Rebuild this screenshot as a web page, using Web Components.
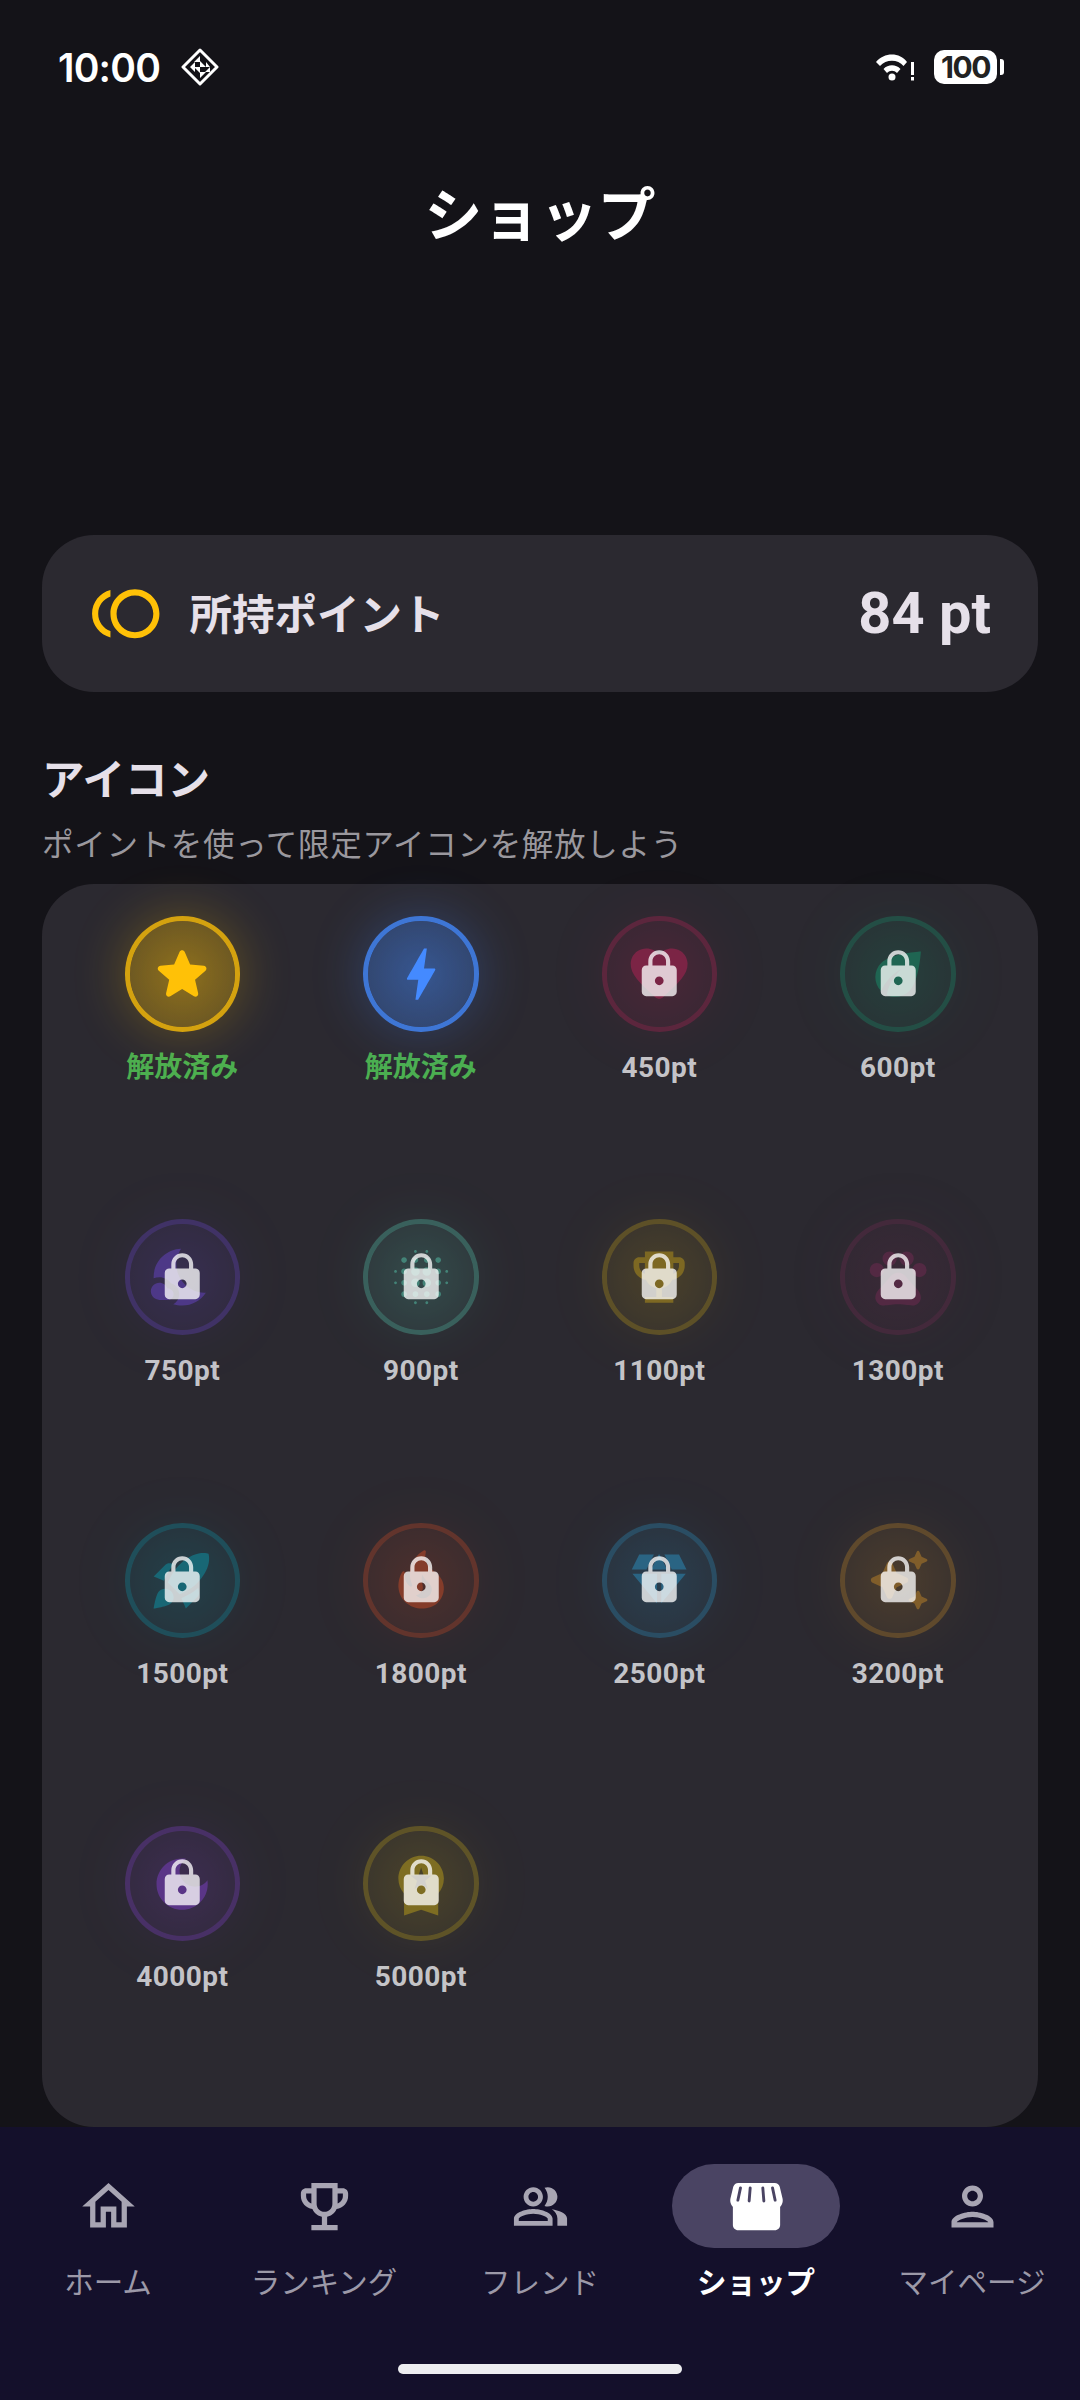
<!DOCTYPE html>
<html lang="ja">
<head>
<meta charset="utf-8">
<title>ショップ</title>
<style>
  html, body { margin: 0; padding: 0; background: #141318; }
  body { width: 1080px; height: 2400px; overflow: hidden; font-family: Roboto, "Noto Sans CJK JP", sans-serif; }
</style>
</head>
<body>
<shop-page>
  <status-bar slot="status"></status-bar>
  <app-title slot="title">ショップ</app-title>
  <point-card slot="points" value="84 pt">所持ポイント</point-card>
  <section-head slot="head" sub="ポイントを使って限定アイコンを解放しよう">アイコン</section-head>
  <icon-grid slot="grid">
    <shop-icon icon="star" color="#FFC107" unlocked>解放済み</shop-icon>
    <shop-icon icon="bolt" color="#448AFF" unlocked>解放済み</shop-icon>
    <shop-icon icon="heart" color="#E91E63">450pt</shop-icon>
    <shop-icon icon="eco" color="#10B981">600pt</shop-icon>
    <shop-icon icon="night" color="#7C4DFF">750pt</shop-icon>
    <shop-icon icon="blur" color="#64FFDA">900pt</shop-icon>
    <shop-icon icon="trophy" color="#EEC010">1100pt</shop-icon>
    <shop-icon icon="pets" color="#8A2A5E">1300pt</shop-icon>
    <shop-icon icon="rocket" color="#00BCD4">1500pt</shop-icon>
    <shop-icon icon="fire" color="#FF5722">1800pt</shop-icon>
    <shop-icon icon="diamond" color="#29B6F6">2500pt</shop-icon>
    <shop-icon icon="sparkle" color="#F5A623">3200pt</shop-icon>
    <shop-icon icon="dark" color="#9C47FF">4000pt</shop-icon>
    <shop-icon icon="medal" color="#F0CC10">5000pt</shop-icon>
  </icon-grid>
  <nav-bar slot="nav">
    <nav-item icon="home">ホーム</nav-item>
    <nav-item icon="trophy">ランキング</nav-item>
    <nav-item icon="people">フレンド</nav-item>
    <nav-item icon="store" selected>ショップ</nav-item>
    <nav-item icon="person">マイページ</nav-item>
  </nav-bar>
</shop-page>

<script>
const JP = 'Roboto, "Noto Sans CJK JP", sans-serif';

const SHOP_ICONS = {
  star: 'M12 17.27l4.15 2.51c.76.46 1.69-.22 1.49-1.08l-1.1-4.72 3.67-3.18c.67-.58.31-1.68-.57-1.75l-4.83-.41-1.89-4.46c-.34-.81-1.5-.81-1.84 0L9.19 8.63l-4.83.41c-.88.07-1.24 1.17-.57 1.75l3.67 3.18-1.1 4.72c-.2.86.73 1.54 1.49 1.08l4.15-2.5z',
  bolt: 'M11 21h-1l1-7H7.5c-.88 0-.33-.75-.31-.78C8.48 10.94 10.42 7.54 13.01 3h1l-1 7h3.51c.4 0 .62.19.4.66C12.97 17.55 11 21 11 21z',
  heart: 'M13.35 20.13c-.76.69-1.93.69-2.69-.01l-.11-.1C5.3 15.27 1.87 12.16 2 8.28c.06-1.7.93-3.33 2.34-4.29 2.64-1.8 5.9-.96 7.66 1.1 1.76-2.06 5.02-2.91 7.66-1.1 1.41.96 2.28 2.59 2.34 4.29.14 3.88-3.3 6.99-8.55 11.76l-.1.09z',
  eco: 'M6.05 8.05c-2.73 2.73-2.73 7.15-.02 9.88 1.47-3.4 4.09-6.24 7.36-7.93-2.77 2.34-4.71 5.61-5.39 9.32 2.6 1.23 5.8.78 7.95-1.37C19.43 14.47 20 4 20 4S9.53 4.57 6.05 8.05z',
  night: 'M11.1 12.08c-2.33-4.51-.5-8.48.53-10.07C6.27 2.2 1.98 6.59 1.98 12c0 .14.02.28.02.42.62-.27 1.29-.42 2-.42 1.66 0 3.18.83 4.1 2.15C9.77 14.63 11 16.17 11 18c0 1.52-.87 2.83-2.12 3.51.98.32 2.03.5 3.11.5 3.5 0 6.58-1.8 8.37-4.52-2.36.23-6.98-.97-9.26-5.41zM7 16h-.18C6.4 14.84 5.3 14 4 14c-1.66 0-3 1.34-3 3s1.34 3 3 3h3c1.1 0 2-.9 2-2s-.9-2-2-2z',
  blur: 'M6 13c-.55 0-1 .45-1 1s.45 1 1 1 1-.45 1-1-.45-1-1-1zm0 4c-.55 0-1 .45-1 1s.45 1 1 1 1-.45 1-1-.45-1-1-1zm0-8c-.55 0-1 .45-1 1s.45 1 1 1 1-.45 1-1-.45-1-1-1zm-3 .5c-.28 0-.5.22-.5.5s.22.5.5.5.5-.22.5-.5-.22-.5-.5-.5zM6 5c-.55 0-1 .45-1 1s.45 1 1 1 1-.45 1-1-.45-1-1-1zm15 5.5c.28 0 .5-.22.5-.5s-.22-.5-.5-.5-.5.22-.5.5.22.5.5.5zM14 7c.55 0 1-.45 1-1s-.45-1-1-1-1 .45-1 1 .45 1 1 1zm0-3.5c.28 0 .5-.22.5-.5s-.22-.5-.5-.5-.5.22-.5.5.22.5.5.5zm-11 10c-.28 0-.5.22-.5.5s.22.5.5.5.5-.22.5-.5-.22-.5-.5-.5zm7 7c-.28 0-.5.22-.5.5s.22.5.5.5.5-.22.5-.5-.22-.5-.5-.5zM10 3.5c.28 0 .5-.22.5-.5s-.22-.5-.5-.5-.5.22-.5.5.22.5.5.5zM10 7c.55 0 1-.45 1-1s-.45-1-1-1-1 .45-1 1 .45 1 1 1zm0 5.5c-.83 0-1.5.67-1.5 1.5s.67 1.5 1.5 1.5 1.5-.67 1.5-1.5-.67-1.5-1.5-1.5zm8 .5c-.55 0-1 .45-1 1s.45 1 1 1 1-.45 1-1-.45-1-1-1zm0 4c-.55 0-1 .45-1 1s.45 1 1 1 1-.45 1-1-.45-1-1-1zm0-8c-.55 0-1 .45-1 1s.45 1 1 1 1-.45 1-1-.45-1-1-1zm0-4c-.55 0-1 .45-1 1s.45 1 1 1 1-.45 1-1-.45-1-1-1zm3 8.5c-.28 0-.5.22-.5.5s.22.5.5.5.5-.22.5-.5-.22-.5-.5-.5zM14 17c-.55 0-1 .45-1 1s.45 1 1 1 1-.45 1-1-.45-1-1-1zm0 3.5c-.28 0-.5.22-.5.5s.22.5.5.5.5-.22.5-.5-.22-.5-.5-.5zm-4-12c-.83 0-1.5.67-1.5 1.5s.67 1.5 1.5 1.5 1.5-.67 1.5-1.5-.67-1.5-1.5-1.5zm0 8.5c-.55 0-1 .45-1 1s.45 1 1 1 1-.45 1-1-.45-1-1-1zm4-4.5c-.83 0-1.5.67-1.5 1.5s.67 1.5 1.5 1.5 1.5-.67 1.5-1.5-.67-1.5-1.5-1.5zm0-4c-.83 0-1.5.67-1.5 1.5s.67 1.5 1.5 1.5 1.5-.67 1.5-1.5-.67-1.5-1.5-1.5z',
  trophy: 'M19 5h-2V3H7v2H5c-1.1 0-2 .9-2 2v1c0 2.55 1.92 4.63 4.39 4.94.63 1.5 1.98 2.63 3.61 2.96V19H7v2h10v-2h-4v-3.1c1.63-.33 2.98-1.46 3.61-2.96C19.08 12.63 21 10.55 21 8V7c0-1.1-.9-2-2-2zM5 8V7h2v3.82C5.84 10.4 5 9.3 5 8zm14 0c0 1.3-.84 2.4-2 2.82V7h2v1z',
  pets: 'M4.5 7a2.5 2.5 0 1 1 0 5 2.5 2.5 0 0 1 0-5zM9 3a2.5 2.5 0 1 1 0 5 2.5 2.5 0 0 1 0-5zM15 3a2.5 2.5 0 1 1 0 5 2.5 2.5 0 0 1 0-5zM19.5 7a2.5 2.5 0 1 1 0 5 2.5 2.5 0 0 1 0-5zM17.34 14.86c-.87-1.02-1.6-1.89-2.48-2.91-.46-.54-1.05-1.08-1.75-1.32-.11-.04-.22-.07-.33-.09-.25-.04-.52-.04-.78-.04s-.53 0-.79.05c-.11.02-.22.05-.33.09-.7.24-1.28.78-1.75 1.32-.87 1.02-1.6 1.89-2.48 2.91-1.31 1.31-2.92 2.76-2.62 4.79.29 1.02 1.02 2.03 2.33 2.32.73.15 3.06-.44 5.54-.44h.18c2.48 0 4.81.58 5.54.44 1.31-.29 2.04-1.31 2.33-2.32.31-2.04-1.3-3.49-2.61-4.8z',
  rocket: 'M9.19 6.35c-2.04 2.29-3.44 5.58-3.57 5.89L2 10.69l4.05-4.05c.47-.47 1.15-.68 1.81-.55l1.33.26zM11.17 17s3.74-1.55 5.89-3.7c5.4-5.4 4.5-9.62 4.21-10.57-.95-.3-5.17-1.19-10.57 4.21C8.55 9.09 7 12.83 7 12.83L11.17 17zm6.48-2.19c-2.29 2.04-5.58 3.44-5.89 3.57L13.31 22l4.05-4.05c.47-.47.68-1.15.55-1.81l-.26-1.33zM9 18c0 .83-.34 1.58-.88 2.12C6.94 21.3 2 22 2 22s.7-4.94 1.88-6.12C4.42 15.34 5.17 15 6 15c1.66 0 3 1.34 3 3z',
  fire: 'M19.48 12.35c-1.57-4.08-7.16-4.3-5.81-10.23.1-.44-.37-.78-.75-.55C9.29 3.71 6.68 8 8.87 13.62c.18.46-.36.89-.75.59-1.81-1.37-2-3.34-1.84-4.75.06-.52-.62-.77-.91-.34C4.69 10.16 4 11.84 4 14.37c.38 5.6 5.11 7.32 6.81 7.54 2.43.31 5.06-.14 6.95-1.87 2.08-1.93 2.84-5.01 1.72-7.69zm-9.28 5.03c1.44-.35 2.18-1.39 2.38-2.31.33-1.43-.96-2.83-.09-5.09.33 1.87 3.27 3.04 3.27 5.08.08 2.53-2.66 4.7-5.56 2.32z',
  diamond: 'M12.16 3h-.32L9.21 8.25h5.58L12.16 3zM16.46 8.25h5.16L19 3h-5.16l2.62 5.25zM21.38 9.75H12.75V20.1l8.63-10.35zM11.25 20.1V9.75H2.62l8.63 10.35zM7.54 8.25L10.16 3H5L2.38 8.25h5.16z',
  sparkle: 'M19.46 8l.79-1.75L22 5.46c.39-.18.39-.73 0-.91l-1.75-.79L19.46 2c-.18-.39-.73-.39-.91 0l-.79 1.75-1.76.79c-.39.18-.39.73 0 .91l1.75.79.79 1.76c.18.39.74.39.92 0zM11.5 9.5L9.91 6c-.35-.78-1.47-.78-1.82 0L6.5 9.5 3 11.09c-.78.36-.78 1.47 0 1.82l3.5 1.59L8.09 18c.36.78 1.47.78 1.82 0l1.59-3.5 3.5-1.59c.78-.36.78-1.47 0-1.82L11.5 9.5zm7.04 6.5l-.79 1.75-1.75.79c-.39.18-.39.73 0 .91l1.75.79.79 1.76c.18.39.73.39.91 0l.79-1.75 1.76-.79c.39-.18.39-.73 0-.91l-1.75-.79-.79-1.76c-.18-.39-.74-.39-.92 0z',
  dark: 'M12 3c-4.97 0-9 4.03-9 9s4.03 9 9 9 9-4.03 9-9c0-.46-.04-.92-.1-1.36-.98 1.37-2.58 2.26-4.4 2.26-2.98 0-5.4-2.42-5.4-5.4 0-1.81.89-3.42 2.26-4.4C12.92 3.04 12.46 3 12 3z',
  medal: 'M9.68 13.69L12 11.93l2.31 1.76-.88-2.85L15.75 9h-2.84L12 6.19 11.09 9H8.25l2.31 1.84-.88 2.85zM20 10c0-4.42-3.58-8-8-8s-8 3.58-8 8c0 2.03.76 3.87 2 5.28V23l6-2 6 2v-7.72c1.24-1.41 2-3.25 2-5.28z'
};
const LOCK = 'M18 8h-1V6c0-2.76-2.24-5-5-5S7 3.24 7 6v2H6c-1.1 0-2 .9-2 2v10c0 1.1.9 2 2 2h12c1.1 0 2-.9 2-2V10c0-1.1-.9-2-2-2zm-6 9c-1.1 0-2-.9-2-2s.9-2 2-2 2 .9 2 2-.9 2-2 2zm3.1-9H8.9V6c0-1.71 1.39-3.1 3.1-3.1 1.71 0 3.1 1.39 3.1 3.1v2z';
const NAV_ICONS = {
  home: '<path d="M12 5.69l5 4.5V18h-2v-6H9v6H7v-7.81l5-4.5M12 3L2 12h3v8h6v-6h2v6h6v-8h3L12 3z"/>',
  trophy: '<path d="M19 5h-2V3H7v2H5c-1.1 0-2 .9-2 2v1c0 2.55 1.92 4.63 4.39 4.94.63 1.5 1.98 2.63 3.61 2.96V19H7v2h10v-2h-4v-3.1c1.63-.33 2.98-1.46 3.61-2.96C19.08 12.63 21 10.55 21 8V7c0-1.1-.9-2-2-2zM5 8V7h2v3.82C5.84 10.4 5 9.3 5 8zm7 6c-1.65 0-3-1.35-3-3V5h6v6c0 1.65-1.35 3-3 3zm7-6c0 1.3-.84 2.4-2 2.82V7h2v1z"/>',
  people: '<g transform="translate(12 12) scale(.92) translate(-12 -12)"><path d="M16.67 13.13C18.04 14.06 19 15.32 19 17v3h4v-3c0-2.18-3.57-3.47-6.33-3.87zM15 12c2.21 0 4-1.79 4-4s-1.79-4-4-4c-.47 0-.91.1-1.33.24C14.5 5.27 15 6.58 15 8s-.5 2.73-1.33 3.76c.42.14.86.24 1.33.24zM9 12c2.21 0 4-1.79 4-4s-1.79-4-4-4-4 1.79-4 4 1.79 4 4 4zm0-6c1.1 0 2 .9 2 2s-.9 2-2 2-2-.9-2-2 .9-2 2-2zM9 13c-2.67 0-8 1.34-8 4v3h16v-3c0-2.66-5.33-4-8-4zm6 5H3v-.99C3.2 16.29 6.3 15 9 15s5.8 1.29 6 2v1z"/></g>',
  store: '<path d="M21.9 8.89l-1.05-4.37c-.22-.9-1-1.52-1.91-1.52H5.05c-.9 0-1.69.63-1.9 1.52L2.1 8.89c-.24 1.02-.02 2.06.62 2.88.08.11.19.19.28.29V19c0 1.1.9 2 2 2h14c1.1 0 2-.9 2-2v-6.94c.09-.09.2-.18.28-.28.64-.82.87-1.87.62-2.89z"/><g fill="none" stroke="#4A4463" stroke-width="1.1" stroke-linecap="round"><path d="M5.9 4.9L4.9 9.6"/><path d="M9.6 4.9L9.2 9.9"/><path d="M14.4 4.9L14.8 9.9"/><path d="M18.1 4.9L19.1 9.6"/></g>',
  person: '<path d="M12 6c1.1 0 2 .9 2 2s-.9 2-2 2-2-.9-2-2 .9-2 2-2m0 10c2.7 0 5.8 1.29 6 2H6c.23-.72 3.31-2 6-2m0-12C9.79 4 8 5.79 8 8s1.79 4 4 4 4-1.79 4-4-1.79-4-4-4zm0 10c-2.67 0-8 1.34-8 4v2h16v-2c0-2.66-5.33-4-8-4z"/>'
};

function define(name, html, init) {
  customElements.define(name, class extends HTMLElement {
    constructor() {
      super();
      this.attachShadow({ mode: 'open' }).innerHTML = html;
    }
    connectedCallback() { if (init) init(this, this.shadowRoot); }
  });
}

define('shop-page', `
  <style>
    :host { display: flex; flex-direction: column; width: 1080px; height: 2400px; background: #141318; font-family: ${JP}; }
    .body { flex: 1; min-height: 0; display: flex; flex-direction: column; padding: 0 42px; }
  </style>
  <slot name="status"></slot>
  <slot name="title"></slot>
  <div class="body">
    <slot name="points"></slot>
    <slot name="head"></slot>
    <slot name="grid"></slot>
  </div>
  <slot name="nav"></slot>`);

define('status-bar', `
  <style>
    :host { display: flex; align-items: center; height: 88px; padding: 50px 76px 4px 58px; box-sizing: border-box; color: #fff; flex: none; }
    .time { font: 600 39px/1 Inter, Roboto, sans-serif; letter-spacing: -0.8px; }
    .diamond { margin-left: 21px; display: block; }
    .sp { flex: 1; }
    .wifi { display: block; margin-right: 18px; }
    .bat { width: 63px; height: 34px; border-radius: 10px; background: #fff; color: #222; font: 700 30px/34px Inter, Roboto, sans-serif; letter-spacing: -1.5px; text-align: center; }
    .nub { width: 4px; height: 16px; background: #fff; border-radius: 0 3px 3px 0; margin-left: 3px; }
  </style>
  <span class="time">10:00</span>
  <svg class="diamond" width="38" height="38" viewBox="0 0 38 38">
    <path d="M19 2L36 19 19 36 2 19z" fill="none" stroke="#fff" stroke-width="3" stroke-linejoin="round"/>
    <path d="M19 8L13 14h6zM9 19l5-5v5zM19 19h6l-6-6zM29 19l-4-5v5zM19 19h-6l6 6zM19 30l6-6h-6zM9 19l5 5v-5zM29 19l-5 5h5z" fill="#fff"/>
  </svg>
  <span class="sp"></span>
  <svg class="wifi" width="40" height="30" viewBox="0 0 40 30">
    <path d="M0 10C8 0 24 0 31 10l-3.5 4C22 7 10 7 4 14z" fill="#fff"/>
    <path d="M7.500 17C12 12 20 12 24.500 17L21 21C18 18 14 18 11 21z" fill="#fff"/>
    <circle cx="16" cy="25" r="3.500" fill="#fff"/>
    <rect x="35" y="10" width="3" height="13" fill="#fff"/><rect x="35" y="25" width="3" height="3.500" fill="#fff"/>
  </svg>
  <span class="bat">100</span><span class="nub"></span>`);

define('app-title', `
  <style>
    :host { display: block; flex: none; height: 447px; padding-top: 94px; box-sizing: border-box; text-align: center; color: #fff; font: 700 57.750px/68px ${JP}; }
  </style>
  <slot></slot>`);

define('point-card', `
  <style>
    :host { display: flex; flex: none; align-items: center; height: 157px; padding: 0 47px; box-sizing: border-box; border-radius: 52px; background: #2B2930; color: #E6E0E9; }
    svg { display: block; width: 73.500px; height: 73.500px; fill: #FFC107; flex: none; }
    .label { margin-left: 27px; padding-top: 6px; font: 700 42.500px/1 ${JP}; flex: 1; }
    .val { font: 700 57.750px/1 Roboto, sans-serif; }
  </style>
  <svg viewBox="0 0 24 24"><path d="M15 4c-4.420 0-8 3.580-8 8s3.580 8 8 8 8-3.580 8-8-3.580-8-8-8zm0 14c-3.310 0-6-2.690-6-6s2.690-6 6-6 6 2.690 6 6-2.690 6-6 6zM3 12c0-2.610 1.670-4.830 4-5.650V4.260C3.550 5.150 1 8.270 1 12s2.550 6.850 6 7.740v-2.090c-2.330-.82-4-3.040-4-5.650z"/></svg>
  <span class="label"><slot></slot></span>
  <span class="val"></span>`, (el, root) => { root.querySelector('.val').textContent = el.getAttribute('value'); });

define('section-head', `
  <style>
    :host { display: block; flex: none; height: 192px; padding-top: 63px; box-sizing: border-box; }
    .t { color: #E6E0E9; font: 700 42.500px/52px ${JP}; }
    .s { color: #9A989E; font: 400 31.500px/44px ${JP}; letter-spacing: .7px; margin-top: 17px; }
  </style>
  <div class="t"><slot></slot></div>
  <div class="s"></div>`, (el, root) => { root.querySelector('.s').textContent = el.getAttribute('sub'); });

define('icon-grid', `
  <style>
    :host { display: grid; flex: 1; min-height: 0; grid-template-columns: repeat(4, 1fr); grid-auto-rows: 303.330px; align-content: start; padding: 32px 21px 0; box-sizing: border-box; background: #2B2930; border-radius: 52px; }
  </style>
  <slot></slot>`);

define('shop-icon', `
  <style>
    :host { display: flex; flex-direction: column; align-items: center; font-family: ${JP}; --ring: 80%; --mid: 47%; --edge: 26%; --halo: 28%; }
    :host(:not([unlocked])) { --ring: 62%; --mid: 38%; --edge: 15%; --halo: 18%; }
    .badge { position: relative; width: 115.500px; height: 115.500px; flex: none; }
    .disc { width: 100%; height: 100%; box-sizing: border-box; border-radius: 50%; border: 5.250px solid color-mix(in srgb, var(--c) var(--ring), transparent);
      background: radial-gradient(circle, color-mix(in srgb, var(--c) var(--mid), transparent) 0%, color-mix(in srgb, var(--c) var(--edge), transparent) 100%);
      background-clip: padding-box;
      box-shadow: 0 0 52px color-mix(in srgb, var(--c) var(--halo), transparent);
      display: flex; align-items: center; justify-content: center; }
    :host(:not([unlocked])) .disc { opacity: .42; }
    .glyph { display: block; width: 68.250px; height: 68.250px; flex: none; fill: var(--c); fill-rule: evenodd; }
    .lock { position: absolute; left: 50%; top: 50%; width: 52.500px; height: 52.500px; margin: -26.250px 0 0 -26.250px; fill: rgba(255,255,255,.76); }
    :host([unlocked]) .lock { display: none; }
    .label { margin-top: 18px; font-size: 28px; line-height: 36px; font-weight: 700; letter-spacing: .45px; color: #C4C4C8; }
    :host([unlocked]) .label { color: #4CAF50; letter-spacing: 0; }
  </style>
  <div class="badge">
    <div class="disc"><svg class="glyph" viewBox="0 0 24 24"><path/></svg></div>
    <svg class="lock" viewBox="0 0 24 24"><path d="${LOCK}"/></svg>
  </div>
  <div class="label"><slot></slot></div>`, (el, root) => {
    el.style.setProperty('--c', el.getAttribute('color'));
    root.querySelector('.glyph path').setAttribute('d', SHOP_ICONS[el.getAttribute('icon')]);
  });

define('nav-bar', `
  <style>
    :host { display: flex; flex-direction: column; flex: none; height: 273px; box-sizing: border-box; background: #14102B; padding-top: 37px; }
    .row { display: grid; grid-template-columns: repeat(5, 1fr); flex: 1; align-items: start; }
    .home { width: 284px; height: 10px; border-radius: 5px; background: #EDEDF0; align-self: center; margin-bottom: 26px; flex: none; }
  </style>
  <div class="row"><slot></slot></div>
  <div class="home"></div>`);

define('nav-item', `
  <style>
    :host { display: flex; flex-direction: column; align-items: center; color: #9C99A8; font-family: ${JP}; }
    .pill { width: 168px; height: 84px; border-radius: 42px; display: flex; align-items: center; justify-content: center; }
    svg { display: block; width: 63px; height: 63px; fill: #A8A5B3; }
    .label { margin-top: 16px; font-size: 29.500px; line-height: 38px; white-space: nowrap; }
    :host([selected]) .pill { background: #4A4463; }
    :host([selected]) svg { fill: #fff; }
    :host([selected]) .label { color: #fff; font-weight: 700; }
  </style>
  <div class="pill"><svg viewBox="0 0 24 24"></svg></div>
  <div class="label"><slot></slot></div>`, (el, root) => {
    root.querySelector('svg').innerHTML = NAV_ICONS[el.getAttribute('icon')];
  });
</script>
</body>
</html>
